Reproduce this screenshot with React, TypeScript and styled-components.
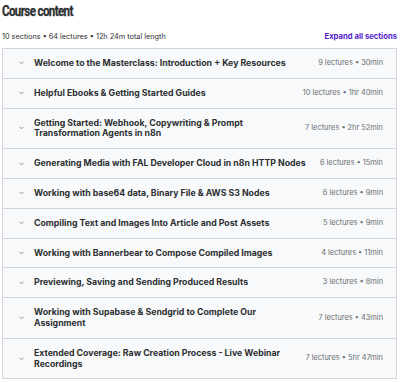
import React from "react";
import styled, { createGlobalStyle } from "styled-components";

const Global = createGlobalStyle`
  html, body { margin: 0; padding: 0; background: #ffffff; }
  body { font-family: Inter, "Noto Sans", sans-serif; color: #2d2f31; }
`;

const Page = styled.div`
  width: 400px;
  padding: 0 3px 0 2px;
  box-sizing: border-box;
`;

const HeadingRow = styled.div`
  height: 16px;
`;

const Heading = styled.h2`
  display: inline-block;
  margin: 0;
  font-family: Roboto, "Noto Sans", sans-serif;
  font-size: 15px;
  line-height: 16px;
  font-weight: 700;
  letter-spacing: -0.8px;
  color: #2d2f31;
  transform: scaleX(0.77);
  transform-origin: left center;
  -webkit-text-stroke: 0.3px #2d2f31;
`;

const SummaryBar = styled.div`
  display: flex;
  align-items: center;
  justify-content: space-between;
  margin-top: 13px;
  height: 14px;
  margin-bottom: 5px;
`;

const Summary = styled.span`
  font-size: 7.3px;
  color: #2d2f31;
`;

const ExpandLink = styled.button`
  border: 0;
  background: none;
  padding: 0;
  font-family: inherit;
  font-size: 7.7px;
  font-weight: 700;
  color: #5624d0;
  cursor: pointer;
`;

const List = styled.div`
  border: 1px solid #d1d7dc;
  border-bottom: 0;
`;

const Row = styled.div`
  display: flex;
  align-items: center;
  gap: 10px;
  background: #f7f9fa;
  border-bottom: 1px solid #d1d7dc;
  padding: 9px 13px 9px 16px;
`;

const Chevron = styled.svg`
  flex: none;
  width: 5px;
  height: 4px;
`;

const Title = styled.div`
  flex: 1;
  font-size: 8.75px;
  line-height: 10.8px;
  font-weight: 700;
  color: #2d2f31;
`;

const Meta = styled.div`
  flex: none;
  font-size: 7.4px;
  line-height: 10.8px;
  color: #6a6f73;
`;

const sections: [string, string][] = [
  ["Welcome to the Masterclass: Introduction + Key Resources", "9 lectures • 30min"],
  ["Helpful Ebooks & Getting Started Guides", "10 lectures • 1hr 40min"],
  ["Getting Started: Webhook, Copywriting & Prompt Transformation Agents in n8n", "7 lectures • 2hr 52min"],
  ["Generating Media with FAL Developer Cloud in n8n HTTP Nodes", "6 lectures • 15min"],
  ["Working with base64 data, Binary File & AWS S3 Nodes", "6 lectures • 9min"],
  ["Compiling Text and Images Into Article and Post Assets", "5 lectures • 9min"],
  ["Working with Bannerbear to Compose Compiled Images", "4 lectures • 11min"],
  ["Previewing, Saving and Sending Produced Results", "3 lectures • 8min"],
  ["Working with Supabase & Sendgrid to Complete Our Assignment", "7 lectures • 43min"],
  ["Extended Coverage: Raw Creation Process - Live Webinar Recordings", "7 lectures • 5hr 47min"],
];

export default function App() {
  return (
    <Page>
      <Global />
      <HeadingRow>
        <Heading>Course content</Heading>
      </HeadingRow>
      <SummaryBar>
        <Summary>10 sections • 64 lectures • 12h 24m total length</Summary>
        <ExpandLink>Expand all sections</ExpandLink>
      </SummaryBar>
      <List>
        {sections.map(([t, m]) => (
          <Row key={t}>
            <Chevron viewBox="0 0 5 4">
              <path d="M0.5 0.8 L2.5 2.8 L4.5 0.8" fill="none" stroke="#80868b" strokeWidth="0.9" />
            </Chevron>
            <Title>{t}</Title>
            <Meta>{m}</Meta>
          </Row>
        ))}
      </List>
    </Page>
  );
}
